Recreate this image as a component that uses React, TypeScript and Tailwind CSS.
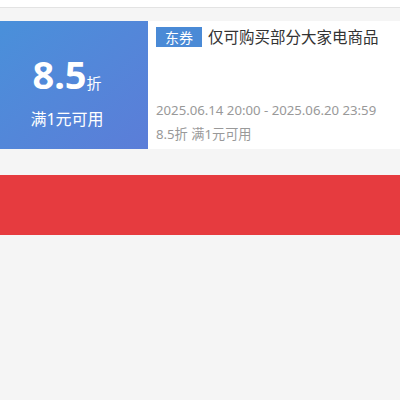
const font = { fontFamily: '"Noto Sans", "Noto Sans CJK SC", sans-serif' }

function CouponCard() {
  return (
    <div className="flex h-[128px] bg-white">
      <div className="flex w-[148px] flex-col items-center justify-center bg-gradient-to-br from-[#4990da] to-[#5b7dd8] pr-[14px] pt-[12px] text-white">
        <div className="flex items-baseline leading-none">
          <span className="text-[38px] font-bold">8.5</span>
          <span className="text-[15px]">折</span>
        </div>
        <div className="mt-[18px] text-[16px] leading-none">满1元可用</div>
      </div>
      <div className="flex flex-1 flex-col pl-[8px] pt-[6px]">
        <div className="flex items-center">
          <span className="flex h-[20px] w-[46px] items-center justify-center bg-[#4a8ad6] text-[14px] text-white">
            东券
          </span>
          <span className="ml-[6px] text-[15.5px] leading-[20px] text-[#333]">
            仅可购买部分大家电商品
          </span>
        </div>
        <div className="mt-auto pb-[3px] text-[13.2px] leading-[24px] text-[#999]">
          <div>2025.06.14 20:00 - 2025.06.20 23:59</div>
          <div>8.5折 满1元可用</div>
        </div>
      </div>
    </div>
  )
}

function App() {
  return (
    <div className="min-h-[400px] bg-[#f5f5f5]" style={font}>
      <div className="h-[8px] border-b border-[#e3e3e3] bg-white"></div>
      <div className="pt-[13px]">
        <CouponCard />
      </div>
      <div className="mt-[26px] h-[60px] bg-[#e63b3f]"></div>
    </div>
  )
}

export default App
